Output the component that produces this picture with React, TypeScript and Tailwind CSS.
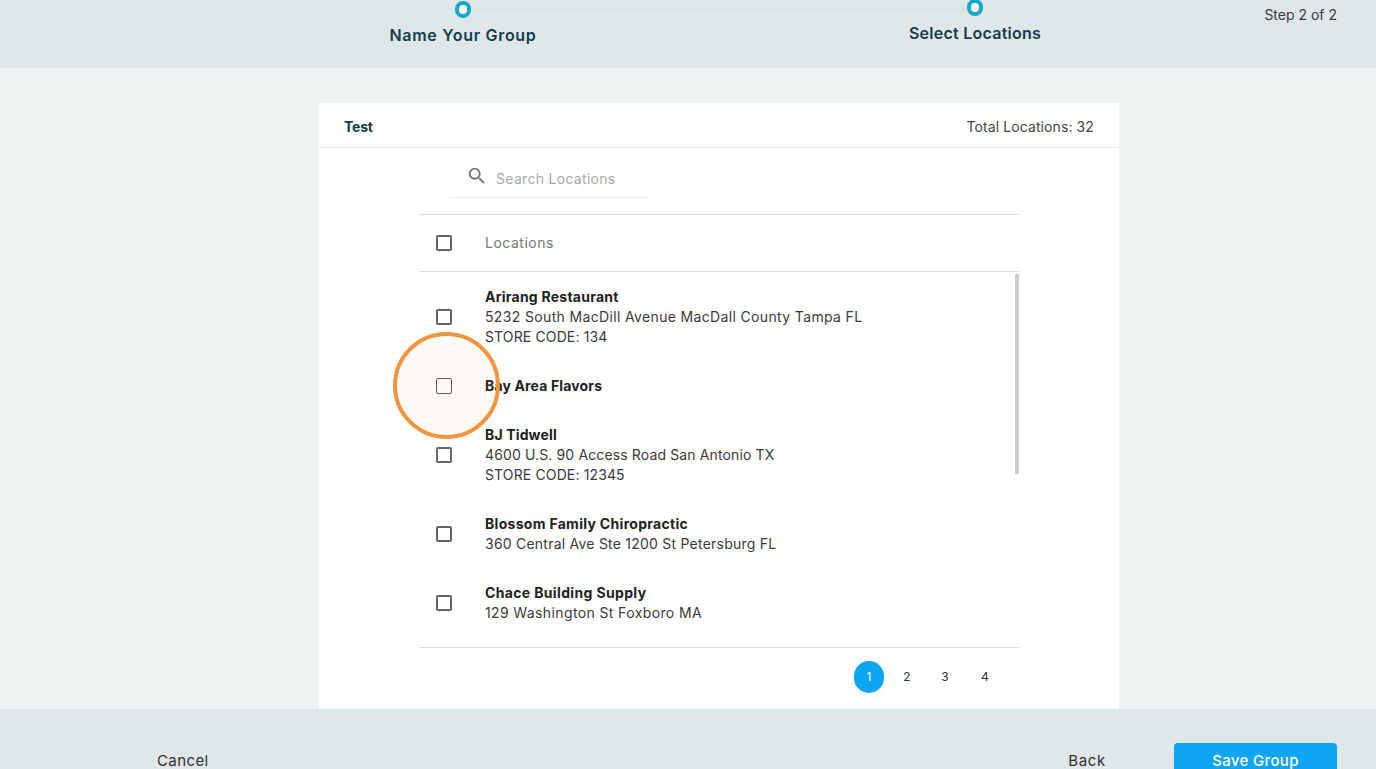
import { MdSearch } from "react-icons/md"

const locations = [
  {
    name: "Arirang Restaurant",
    nameClass: "tracking-[0.24px]",
    lines: [
      { text: "5232 South MacDill Avenue MacDall County Tampa FL", cls: "tracking-[0.35px]" },
      { text: "STORE CODE: 134", cls: "tracking-[0.13px]" },
    ],
  },
  { name: "Bay Area Flavors", nameClass: "tracking-[0.15px]", lines: [], thin: true },
  {
    name: "BJ Tidwell",
    nameClass: "tracking-[0.15px]",
    lines: [
      { text: "4600 U.S. 90 Access Road San Antonio TX", cls: "tracking-[0.13px]" },
      { text: "STORE CODE: 12345", cls: "tracking-[0.13px]" },
    ],
  },
  {
    name: "Blossom Family Chiropractic",
    nameClass: "tracking-[0.3px]",
    lines: [{ text: "360 Central Ave Ste 1200 St Petersburg FL", cls: "tracking-[0.23px]" }],
  },
  {
    name: "Chace Building Supply",
    nameClass: "tracking-[0.35px]",
    lines: [{ text: "129 Washington St Foxboro MA", cls: "tracking-[0.38px]" }],
  },
]

function Checkbox({ thin }: { thin?: boolean }) {
  return (
    <span
      className={
        thin
          ? "block w-4 h-4 shrink-0 rounded-[2px] border border-[#555c60] bg-white"
          : "block w-4 h-4 shrink-0 rounded-[2px] border-2 border-[#666666] bg-white"
      }
    />
  )
}

export default function App() {
  return (
    <div className="relative h-screen w-full overflow-hidden flex flex-col bg-[#eff3f4] font-['Inter',sans-serif] text-[#2b2b2b]">
      {/* Stepper */}
      <header className="relative h-[68px] shrink-0 bg-[#e0e7e9] flex items-start pl-[383px] pr-[39px]">
        <div className="absolute left-[471px] top-[8px] w-[496px] h-[3px] bg-[#d9e1e3]" />
        <div className="relative w-[160px] flex flex-col items-center pt-px">
          <span className="block w-4 h-[17px] rounded-full border-[4px] border-[#16a8cb] bg-white" />
          <span className="mt-[7px] text-[16px] leading-5 font-semibold text-[#123c50] tracking-[0.7px] whitespace-nowrap">Name Your Group</span>
        </div>
        <div className="relative w-[160px] ml-[352px] -mt-px flex flex-col items-center">
          <span className="block w-4 h-[17px] rounded-full border-[4px] border-[#16a8cb] bg-white" />
          <span className="mt-[7px] text-[16px] leading-5 font-semibold text-[#123c50] tracking-[0.25px] whitespace-nowrap">Select Locations</span>
        </div>
        <span className="ml-auto mt-[5px] text-[14px] leading-5 text-[#3a3a3a]">Step 2 of 2</span>
      </header>

      <main className="flex-1 min-h-0 pt-[35px] pl-[319px] flex">
        <section className="w-[800px] bg-white flex flex-col">
          <div className="h-[45px] shrink-0 border-b border-[#e8ebec] flex items-center justify-between px-[25px] pt-[2px]">
            <span className="text-[14px] font-bold text-[#123c50] tracking-[-0.2px]">Test</span>
            <span className="text-[14px] text-[#444444] tracking-[0.1px]">Total Locations: 32</span>
          </div>

          <div className="mx-[100px] flex-1 min-h-0 flex flex-col">
            <div className="h-[67px] shrink-0 border-b border-[#dddddd] pt-[17px] pl-[30px]">
              <div className="w-[201px] h-[33px] border-b border-[#ececec] flex items-start gap-[8px] pl-[17px]">
                <MdSearch size={22} className="text-[#757575] shrink-0" />
                <span className="text-[14px] leading-5 mt-[4px] text-[#a9a9a9] tracking-[0.3px]">Search Locations</span>
              </div>
            </div>

            <div className="h-[57px] shrink-0 border-b border-[#dddddd] flex items-center gap-[33px] pl-[17px]">
              <Checkbox />
              <span className="text-[14px] leading-5 text-[#777777] tracking-[0.5px]">Locations</span>
            </div>

            <div className="relative h-[376px] shrink-0 border-b border-[#dddddd] pt-[15px] flex flex-col gap-[29px] pl-[17px]">
              <div className="absolute right-0 top-[2px] w-[4px] h-[200px] bg-[#cccccc]" />
              {locations.map((l) => (
                <div key={l.name} className="flex items-center gap-[33px]">
                  <Checkbox thin={l.thin} />
                  <div className="text-[14px] leading-5 text-[#3a3a3a]">
                    <div className={`font-bold text-[#222222] ${l.nameClass}`}>{l.name}</div>
                    {l.lines.map((t) => (
                      <div key={t.text} className={t.cls}>{t.text}</div>
                    ))}
                  </div>
                </div>
              ))}
            </div>

            <div className="flex items-center justify-end pt-[13px] pr-[19px] text-[12px] text-[#333333]">
              <span className="w-[30px] h-[32px] rounded-full bg-[#0ea5f2] text-white flex items-center justify-center mr-[8px]">1</span>
              <span className="w-[30px] text-center">2</span>
              <span className="w-[8px]" />
              <span className="w-[30px] text-center">3</span>
              <span className="w-[10px]" />
              <span className="w-[30px] text-center">4</span>
            </div>
          </div>
        </section>
      </main>

      <footer className="h-[60px] shrink-0 bg-[#e0e7e9] overflow-hidden flex items-start pl-[157px] pr-[39px] pt-[34px] text-[15px] text-[#2f2f2f]">
        <span className="mt-[8px] leading-5 tracking-[0.4px]">Cancel</span>
        <span className="ml-auto mt-[8px] leading-5 tracking-[0.7px]">Back</span>
        <span className="ml-[68px] w-[163px] h-[46px] shrink-0 rounded-[4px] bg-[#0ea5f2] text-white font-medium text-center pt-[8px] leading-5 tracking-[0.35px]">Save Group</span>
      </footer>

      {/* Highlight ring from the walkthrough */}
      <div className="absolute left-[393px] top-[332px] w-[107px] h-[107px] rounded-full border-[4px] border-[#f2933d] bg-[#f2933d]/[0.05]" />
    </div>
  )
}
